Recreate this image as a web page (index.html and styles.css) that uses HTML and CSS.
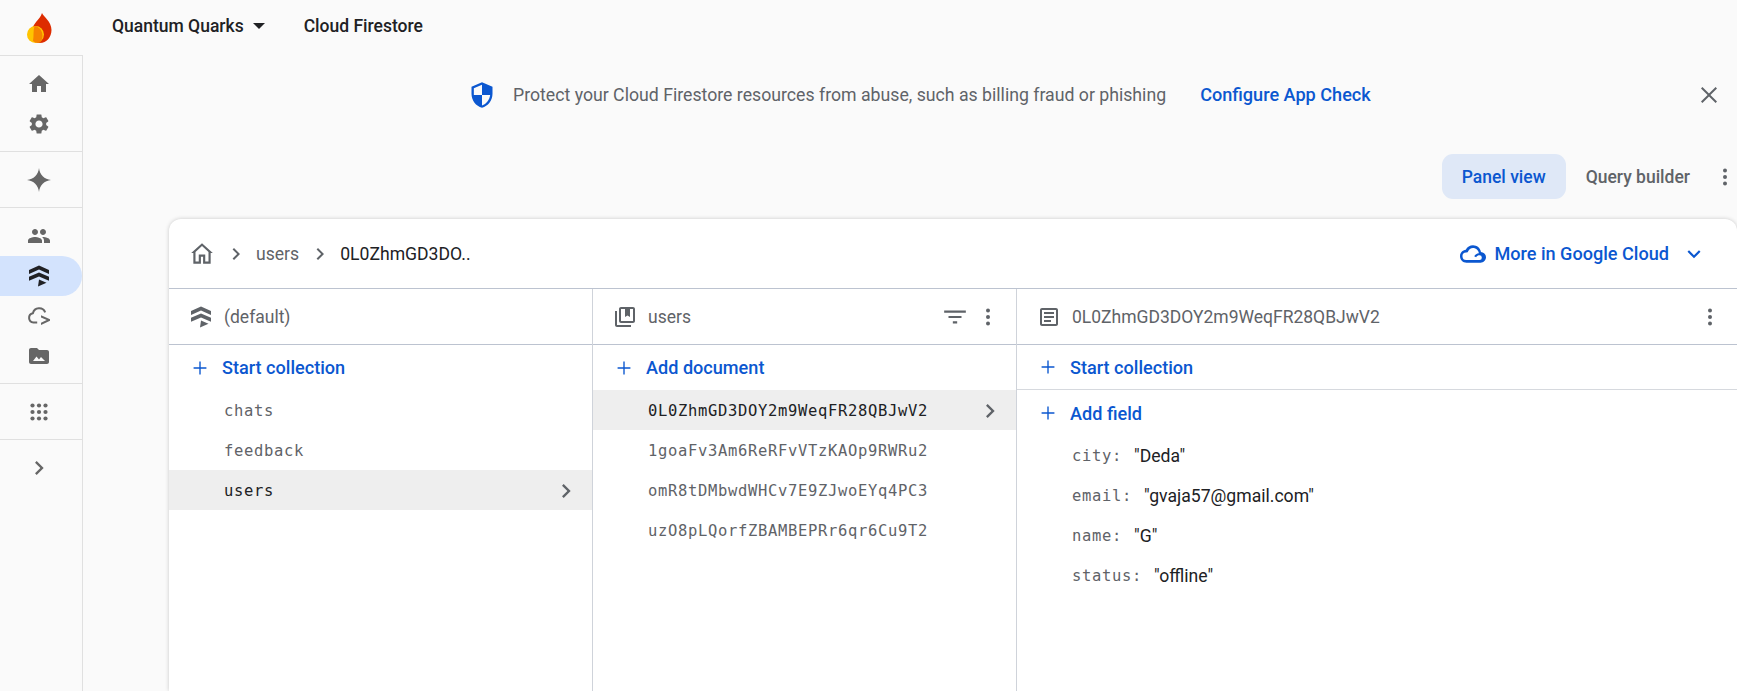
FILE: index.html
```html
<!DOCTYPE html>
<html lang="en">

<head>
    <meta charset="UTF-8">
    <title>Cloud Firestore</title>
    <link rel="stylesheet" href="styles.css">
</head>

<body>

    <!-- Shared icons -->
    <svg class="icon-defs" aria-hidden="true">
        <defs>
            <symbol id="i-chevron" viewBox="0 0 24 24"><path d="M8.59 16.59 13.17 12 8.59 7.41 10 6l6 6-6 6z"/></symbol>
            <symbol id="i-plus" viewBox="0 0 24 24"><path d="M19 12.75h-6.25V19h-1.5v-6.25H5v-1.5h6.25V5h1.5v6.25H19z"/></symbol>
            <symbol id="i-more" viewBox="0 0 24 24"><circle cx="12" cy="5.5" r="2"/><circle cx="12" cy="12" r="2"/><circle cx="12" cy="18.5" r="2"/></symbol>
            <symbol id="i-firestore" viewBox="0 0 24 24"><path d="M12 1.500 22 6v4L12 5.600 2 10V6z"/><path d="M12 8.400l10 4.400v4l-10-4.400-10 4.400v-4z"/><path d="M12 15.600l7.500 3.200-8.500 3.700z"/></symbol>
        </defs>
    </svg>

    <header class="topbar">
        <div class="logo">
            <svg width="30" height="34" viewBox="0 0 30 34">
                <path d="M17 2c1.500 3.500 9.500 8.500 9.500 17 0 7-5 13-11.500 13-6 0-8-5-8-11C7 12 15 9 17 2z" fill="#dd2c00"/>
                <circle cx="10.500" cy="23.500" r="8.500" fill="#ffc400"/>
                <path d="M9.500 15c4.500.5 8 4.500 8 9.500 0 2.500-.7 4.800-2 7-2.500.8-5.500.4-7.500-1.500C9 25 8 19.500 9.500 15z" fill="#f57c00" opacity=".9"/>
            </svg>
        </div>
        <div class="project">Quantum Quarks <span class="caret"></span></div>
        <div class="product">Cloud Firestore</div>
    </header>

    <div class="layout">
        <!-- Left navigation -->
        <nav class="sidebar">
            <div class="nav-group">
                <div class="nav-item"><svg class="icon-24" viewBox="0 0 24 24"><path d="M10 20v-6h4v6h5v-8h3L12 3 2 12h3v8z"/></svg></div>
                <div class="nav-item"><svg class="icon-24" viewBox="0 0 24 24"><path d="M19.14 12.94c.04-.3.06-.61.06-.94 0-.32-.02-.64-.07-.94l2.03-1.58c.18-.14.23-.41.12-.61l-1.92-3.32c-.12-.22-.37-.29-.59-.22l-2.39.96c-.5-.38-1.03-.7-1.62-.94l-.36-2.54c-.04-.24-.24-.41-.48-.41h-3.84c-.24 0-.43.17-.47.41l-.36 2.54c-.59.24-1.13.57-1.62.94l-2.39-.96c-.22-.08-.47 0-.59.22L2.74 8.87c-.12.21-.08.47.12.61l2.03 1.58c-.05.3-.09.63-.09.94s.02.64.07.94l-2.03 1.58c-.18.14-.23.41-.12.61l1.92 3.32c.12.22.37.29.59.22l2.39-.96c.5.38 1.03.7 1.62.94l.36 2.54c.05.24.24.41.48.41h3.84c.24 0 .44-.17.47-.41l.36-2.54c.59-.24 1.13-.56 1.62-.94l2.39.96c.22.08.47 0 .59-.22l1.92-3.32c.12-.22.07-.47-.12-.61l-2.01-1.58zM12 15.6c-1.98 0-3.6-1.62-3.6-3.6s1.62-3.6 3.6-3.6 3.6 1.62 3.6 3.6-1.62 3.6-3.6 3.6z"/></svg></div>
            </div>
            <div class="nav-group">
                <div class="nav-item"><svg class="icon-24" viewBox="0 0 24 24"><path d="M12 0c.5 6.500 5.500 11.500 12 12-6.500.5-11.500 5.500-12 12-.5-6.500-5.500-11.500-12-12C6.500 11.500 11.500 6.500 12 0z"/></svg></div>
            </div>
            <div class="nav-group">
                <div class="nav-item"><svg class="icon-24" viewBox="0 0 24 24"><path d="M16 11c1.660 0 2.990-1.340 2.990-3S17.660 5 16 5c-1.660 0-3 1.340-3 3s1.340 3 3 3zm-8 0c1.660 0 2.990-1.340 2.990-3S9.660 5 8 5C6.340 5 5 6.340 5 8s1.340 3 3 3zm0 2c-2.330 0-7 1.170-7 3.500V19h14v-2.500c0-2.330-4.670-3.500-7-3.500zm8 0c-.29 0-.62.02-.97.05 1.160.84 1.970 1.970 1.970 3.450V19h6v-2.500c0-2.330-4.670-3.500-7-3.500z"/></svg></div>
                <div class="nav-item nav-item-active"><svg class="icon-24"><use href="#i-firestore"/></svg></div>
                <div class="nav-item"><svg class="icon-24" viewBox="0 0 24 24"><path d="M10.200 18.500H6.500a4.700 4.700 0 0 1-.6-9.300A6.500 6.500 0 0 1 18.200 8.300" fill="none" stroke="currentColor" stroke-width="2"/><path d="M14 11.300l9 3.900v1.600l-9 4.100v-2.100l5.800-2.800-5.800-2.600z"/></svg></div>
                <div class="nav-item"><svg class="icon-24" viewBox="0 0 24 24"><path fill-rule="evenodd" d="M20 6h-8l-2-2H4c-1.100 0-2 .9-2 2v12c0 1.100.9 2 2 2h16c1.100 0 2-.9 2-2V8c0-1.100-.9-2-2-2zM6 17l3.500-4.500 2.500 3 2-2.500 4 4z"/></svg></div>
            </div>
            <div class="nav-group">
                <div class="nav-item"><svg class="icon-24" viewBox="0 0 24 24"><circle cx="5.500" cy="5.500" r="2.100"/><circle cx="12" cy="5.500" r="2.100"/><circle cx="18.500" cy="5.500" r="2.100"/><circle cx="5.500" cy="12" r="2.100"/><circle cx="12" cy="12" r="2.100"/><circle cx="18.500" cy="12" r="2.100"/><circle cx="5.500" cy="18.500" r="2.100"/><circle cx="12" cy="18.500" r="2.100"/><circle cx="18.500" cy="18.500" r="2.100"/></svg></div>
            </div>
            <div class="nav-group nav-group-last">
                <div class="nav-item"><svg class="icon-28"><use href="#i-chevron"/></svg></div>
            </div>
        </nav>

        <main class="content">
            <!-- App Check banner -->
            <div class="banner">
                <svg class="banner-shield" viewBox="0 0 24 24"><path d="M12 1 3 5v6c0 5.550 3.840 10.740 9 12 5.160-1.260 9-6.450 9-12V5l-9-4zm0 10.990h7c-.53 4.120-3.280 7.790-7 8.940V12H5V6.300l7-3.110v8.800z"/></svg>
                <span class="banner-text">Protect your Cloud Firestore resources from abuse, such as billing fraud or phishing</span>
                <a class="banner-link">Configure App Check</a>
                <svg class="banner-close" viewBox="0 0 24 24"><path d="M20 5.400 18.600 4 12 10.600 5.400 4 4 5.400 10.600 12 4 18.600 5.400 20 12 13.400 18.600 20 20 18.600 13.400 12z"/></svg>
            </div>

            <div class="view-tabs">
                <div class="tab tab-active">Panel view</div>
                <div class="tab">Query builder</div>
                <svg class="icon-24 tabs-more"><use href="#i-more"/></svg>
            </div>

            <!-- Data viewer -->
            <section class="card">
                <div class="breadcrumb">
                    <svg class="icon-26" viewBox="0 0 24 24"><path d="M12 5.200l6 5.400V19.500h-3V13H9v6.500H6v-8.900zM12 2.500 2 11.500h2V21.500h7V15h2v6.500h7V11.500h2z" transform="translate(0 -.5)"/></svg>
                    <svg class="icon-24 crumb-sep"><use href="#i-chevron"/></svg>
                    <span class="crumb">users</span>
                    <svg class="icon-24 crumb-sep"><use href="#i-chevron"/></svg>
                    <span class="crumb crumb-current">0L0ZhmGD3DO..</span>
                    <div class="cloud-link">
                        <svg class="icon-26" viewBox="0 0 24 24"><path d="M19.350 10.040C18.670 6.590 15.640 4 12 4 9.110 4 6.600 5.640 5.350 8.040 2.340 8.360 0 10.910 0 14c0 3.310 2.690 6 6 6h13c2.760 0 5-2.240 5-5 0-2.640-2.050-4.780-4.650-4.960zM19 17.500H6a3.500 3.500 0 0 1-.4-7l1.500-.2c.9-2.300 2.900-3.800 4.900-3.800 2.700 0 5 2 5.400 4.700-2 .3-3.400 1.300-4.300 2.800l1.800 1c.8-1.200 1.800-1.800 3.100-1.800a2.150 2.150 0 0 1 0 4.300z"/></svg>
                        <span>More in Google Cloud</span>
                        <svg class="icon-26 cloud-chevron" viewBox="0 0 24 24"><path d="M7.410 8.590 12 13.170l4.590-4.580L18 10l-6 6-6-6z"/></svg>
                    </div>
                </div>

                <div class="panels">
                    <div class="panel">
                        <div class="panel-head">
                            <svg class="icon-24"><use href="#i-firestore"/></svg>
                            <span class="panel-title">(default)</span>
                        </div>
                        <div class="action"><svg class="icon-22"><use href="#i-plus"/></svg>Start collection</div>
                        <div class="row">chats</div>
                        <div class="row">feedback</div>
                        <div class="row row-selected">users<svg class="icon-28"><use href="#i-chevron"/></svg></div>
                    </div>

                    <div class="panel">
                        <div class="panel-head">
                            <svg class="icon-24" viewBox="0 0 24 24"><path d="M4 6H2v14c0 1.100.9 2 2 2h14v-2H4V6zm16-4H8c-1.100 0-2 .9-2 2v12c0 1.100.9 2 2 2h12c1.100 0 2-.9 2-2V4c0-1.100-.9-2-2-2zm0 14H8V4h4v8l2.500-1.500L17 12V4h3v12z"/></svg>
                            <span class="panel-title">users</span>
                            <svg class="icon-26 head-filter" viewBox="0 0 24 24"><path d="M10 18h4v-2h-4v2zM2 6v2h20V6H2zm4 7h12v-2H6v2z"/></svg>
                            <svg class="icon-24 head-more"><use href="#i-more"/></svg>
                        </div>
                        <div class="action"><svg class="icon-22"><use href="#i-plus"/></svg>Add document</div>
                        <div class="row row-selected">0L0ZhmGD3DOY2m9WeqFR28QBJwV2<svg class="icon-28"><use href="#i-chevron"/></svg></div>
                        <div class="row">1goaFv3Am6ReRFvVTzKAOp9RWRu2</div>
                        <div class="row">omR8tDMbwdWHCv7E9ZJwoEYq4PC3</div>
                        <div class="row">uzO8pLQorfZBAMBEPRr6qr6Cu9T2</div>
                    </div>

                    <div class="panel">
                        <div class="panel-head">
                            <svg class="icon-24" viewBox="0 0 24 24"><path d="M19 5v14H5V5h14m0-2H5c-1.100 0-2 .9-2 2v14c0 1.100.9 2 2 2h14c1.100 0 2-.9 2-2V5c0-1.100-.9-2-2-2zM14 17H7v-2h7v2zm3-4H7v-2h10v2zm0-4H7V7h10v2z"/></svg>
                            <span class="panel-title">0L0ZhmGD3DOY2m9WeqFR28QBJwV2</span>
                            <svg class="icon-24 head-more head-more-end"><use href="#i-more"/></svg>
                        </div>
                        <div class="action action-ruled"><svg class="icon-22"><use href="#i-plus"/></svg>Start collection</div>
                        <div class="action action-field"><svg class="icon-22"><use href="#i-plus"/></svg>Add field</div>
                        <div class="field"><span class="field-key">city:</span><span class="field-value">"Deda"</span></div>
                        <div class="field"><span class="field-key">email:</span><span class="field-value">"gvaja57@gmail.com"</span></div>
                        <div class="field"><span class="field-key">name:</span><span class="field-value">"G"</span></div>
                        <div class="field"><span class="field-key">status:</span><span class="field-value">"offline"</span></div>
                    </div>
                </div>
            </section>
        </main>
    </div>

</body>

</html>
```
FILE: styles.css
```css
* {
    box-sizing: border-box;
}

html,
body {
    height: 100%;
}

body {
    margin: 0;
    overflow: hidden;
    display: flex;
    flex-direction: column;
    background-color: #fafafa;
    color: #5f6368;
    font-family: Roboto, "Liberation Sans", sans-serif;
    font-size: 17.6px;
}

svg {
    fill: currentColor;
    flex: none;
}

.icon-defs {
    display: none;
}

.icon-22 { width: 22px; height: 22px; }
.icon-24 { width: 24px; height: 24px; }
.icon-26 { width: 26px; height: 26px; }
.icon-28 { width: 28px; height: 28px; }

/* Top bar */
.topbar {
    height: 55px;
    flex: none;
    display: flex;
    align-items: center;
    color: #202124;
    font-size: 17.5px;
    font-weight: 500;
}

.logo {
    width: 82px;
    padding-left: 25px;
    display: flex;
}

.project,
.product {
    padding-bottom: 3px;
}

.project {
    margin-left: 30px;
    display: flex;
    align-items: center;
}

.caret {
    width: 0;
    height: 0;
    margin-left: 9px;
    border-left: 6px solid transparent;
    border-right: 6px solid transparent;
    border-top: 6px solid #202124;
}

.product {
    margin-left: 39px;
}

/* Sidebar */
.layout {
    flex: 1;
    display: flex;
    min-height: 0;
}

.sidebar {
    width: 83px;
    flex: none;
    color: #666;
    border-top: 1px solid #e0e0e0;
    border-right: 1px solid #e0e0e0;
}

.nav-group {
    padding: 8px 0 7px;
    border-bottom: 1px solid #e0e0e0;
}

.nav-group-last {
    border-bottom: none;
}

.nav-item {
    height: 40px;
    display: flex;
    align-items: center;
    justify-content: center;
    padding-right: 4px;
}

.nav-item-active {
    background-color: #d3e3fd;
    color: #202124;
    border-radius: 0 20px 20px 0;
}

/* Main content */
.content {
    flex: 1;
    min-width: 0;
    display: flex;
    flex-direction: column;
}

.banner {
    height: 79px;
    display: flex;
    align-items: center;
    padding-left: 385px;
    padding-right: 16px;
    flex: none;
}

.banner-shield {
    width: 28px;
    height: 28px;
    color: #0b57d0;
}

.banner-text {
    margin-left: 17px;
    font-size: 17.7px;
}

.banner-link {
    margin-left: 34px;
    color: #0b57d0;
    font-size: 18.1px;
    font-weight: 500;
}

.banner-close {
    width: 24px;
    height: 24px;
    margin-left: auto;
}

.view-tabs {
    height: 45px;
    margin-top: 20px;
    flex: none;
    display: flex;
    align-items: center;
    justify-content: flex-end;
}

.tab {
    height: 45px;
    padding: 0 20px;
    display: flex;
    align-items: center;
    border-radius: 11px;
    font-size: 17.5px;
    font-weight: 500;
}

.tab-active {
    background-color: #dfe8f7;
    color: #0b57d0;
}

.tabs-more {
    margin-left: 3px;
}

/* Data card */
.card {
    flex: 1;
    min-height: 0;
    margin-top: 20px;
    margin-left: 86px;
    display: flex;
    flex-direction: column;
    background-color: #fff;
    border-radius: 12px 12px 0 0;
    box-shadow: 0 0 4px rgba(0, 0, 0, 0.2);
}

.breadcrumb {
    height: 70px;
    flex: none;
    display: flex;
    align-items: center;
    padding: 0 30px 0 20px;
    border-bottom: 1px solid #bcc3d0;
}

.crumb-sep {
    margin-left: 9px;
}

.crumb {
    margin-left: 8px;
}

.crumb-current {
    color: #202124;
}

.cloud-link {
    margin-left: auto;
    display: flex;
    align-items: center;
    gap: 8px;
    color: #0b57d0;
    font-size: 18.1px;
    font-weight: 500;
}

.cloud-chevron {
    margin-left: 4px;
}

.panels {
    flex: 1;
    min-height: 0;
    display: grid;
    grid-template-columns: 424px 424px 1fr;
}

.panel {
    border-right: 1px solid #cfd3da;
}

.panel:last-child {
    border-right: none;
}

.panel-head {
    height: 56px;
    display: flex;
    align-items: center;
    padding-left: 20px;
    border-bottom: 1px solid #bcc3d0;
}

.panel-title {
    margin-left: 11px;
    font-size: 17.5px;
}

.head-filter {
    margin-left: auto;
}

.head-more {
    margin-left: 8px;
    margin-right: 16px;
}

.head-more-end {
    margin-left: auto;
    margin-right: 15px;
}

.action {
    height: 45px;
    display: flex;
    align-items: center;
    gap: 11px;
    padding-left: 20px;
    color: #0b57d0;
    font-size: 18.1px;
    font-weight: 500;
}

.action-ruled {
    border-bottom: 1px solid #d6d9de;
}

.action-field {
    height: 46px;
}

.row {
    height: 40px;
    display: flex;
    align-items: center;
    justify-content: space-between;
    padding: 1px 12px 0 55px;
    font-family: "DejaVu Sans Mono", monospace;
    font-size: 15.5px;
    letter-spacing: 0.67px;
}

.row-selected {
    background-color: #eeeeee;
    color: #202124;
}

.row-selected svg {
    color: #5f6368;
}

.field {
    height: 40px;
    display: flex;
    align-items: center;
    padding-left: 55px;
}

.field-key {
    font-family: "DejaVu Sans Mono", monospace;
    font-size: 15.5px;
    letter-spacing: 0.67px;
}

.field-value {
    margin-left: 12px;
    color: #202124;
}
```
